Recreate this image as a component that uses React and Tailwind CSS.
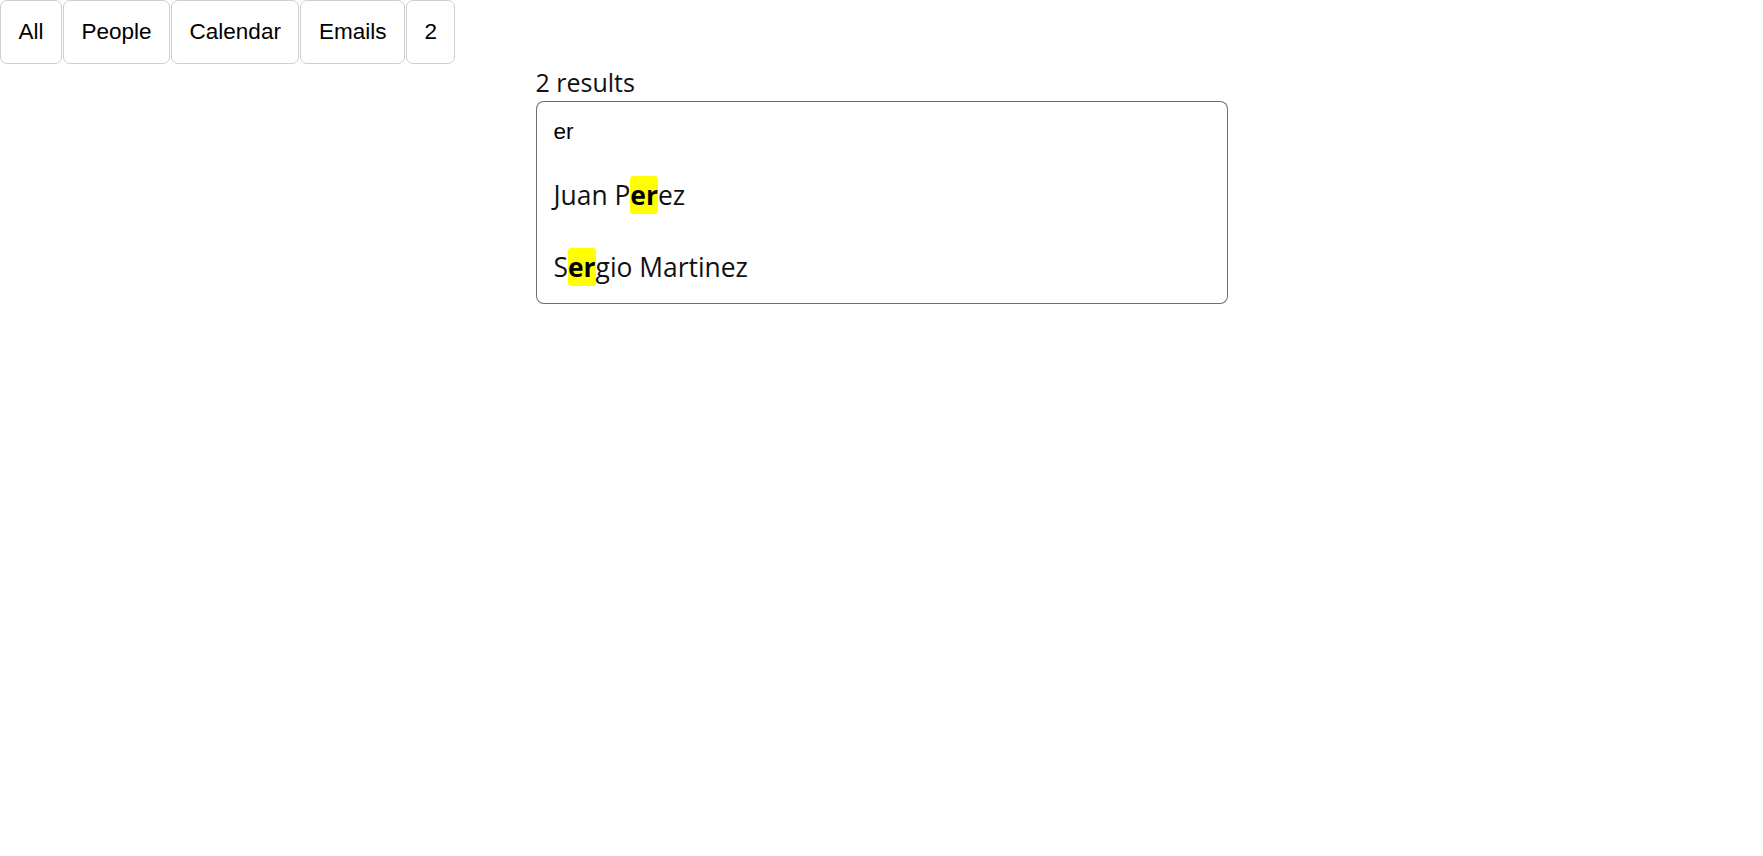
import { useState } from 'react';

const tabs = ['All', 'People', 'Calendar', 'Emails', '2'];
const people = ['Juan Perez', 'Sergio Martinez'];

function Highlight({ text, query }) {
  const i = text.toLowerCase().indexOf(query.toLowerCase());
  if (!query || i < 0) return text;
  return (
    <>
      {text.slice(0, i)}
      <mark className="bg-[#ffff00] text-black font-bold rounded-[3px] py-[1px]">{text.slice(i, i + query.length)}</mark>
      {text.slice(i + query.length)}
    </>
  );
}

export default function App() {
  const [query, setQuery] = useState('er');
  const results = people.filter((p) => p.toLowerCase().includes(query.toLowerCase()));

  return (
    <div className="min-h-screen bg-white text-[#111]">
      <div className="flex gap-[1px] font-['Liberation_Sans',Arial,sans-serif] text-[22.5px]">
        {tabs.map((t) => (
          <button
            key={t}
            className="h-[64px] px-[17.5px] border border-[#cfcfcf] rounded-[7px] bg-white text-black"
          >
            {t}
          </button>
        ))}
      </div>

      <div className="w-[692px] mx-auto font-['Open_Sans','Noto_Sans',sans-serif]">
        <p className="text-[25px] leading-[37px]">{results.length} results</p>
        <input
          value={query}
          onChange={(e) => setQuery(e.target.value)}
          className="block w-full h-[58px] px-[17px] pt-[3px] border border-b-0 border-[#6e6e6e] rounded-t-[8px] outline-none font-['Liberation_Sans',Arial,sans-serif] text-[22.5px] text-black"
        />
        <ul className="border border-t-0 border-[#6e6e6e] rounded-b-[8px]">
          {results.map((p) => (
            <li key={p} className="h-[72px] flex items-center px-[17px] text-[26.4px] leading-[37px]">
              <span>
                <Highlight text={p} query={query} />
              </span>
            </li>
          ))}
        </ul>
      </div>
    </div>
  );
}
